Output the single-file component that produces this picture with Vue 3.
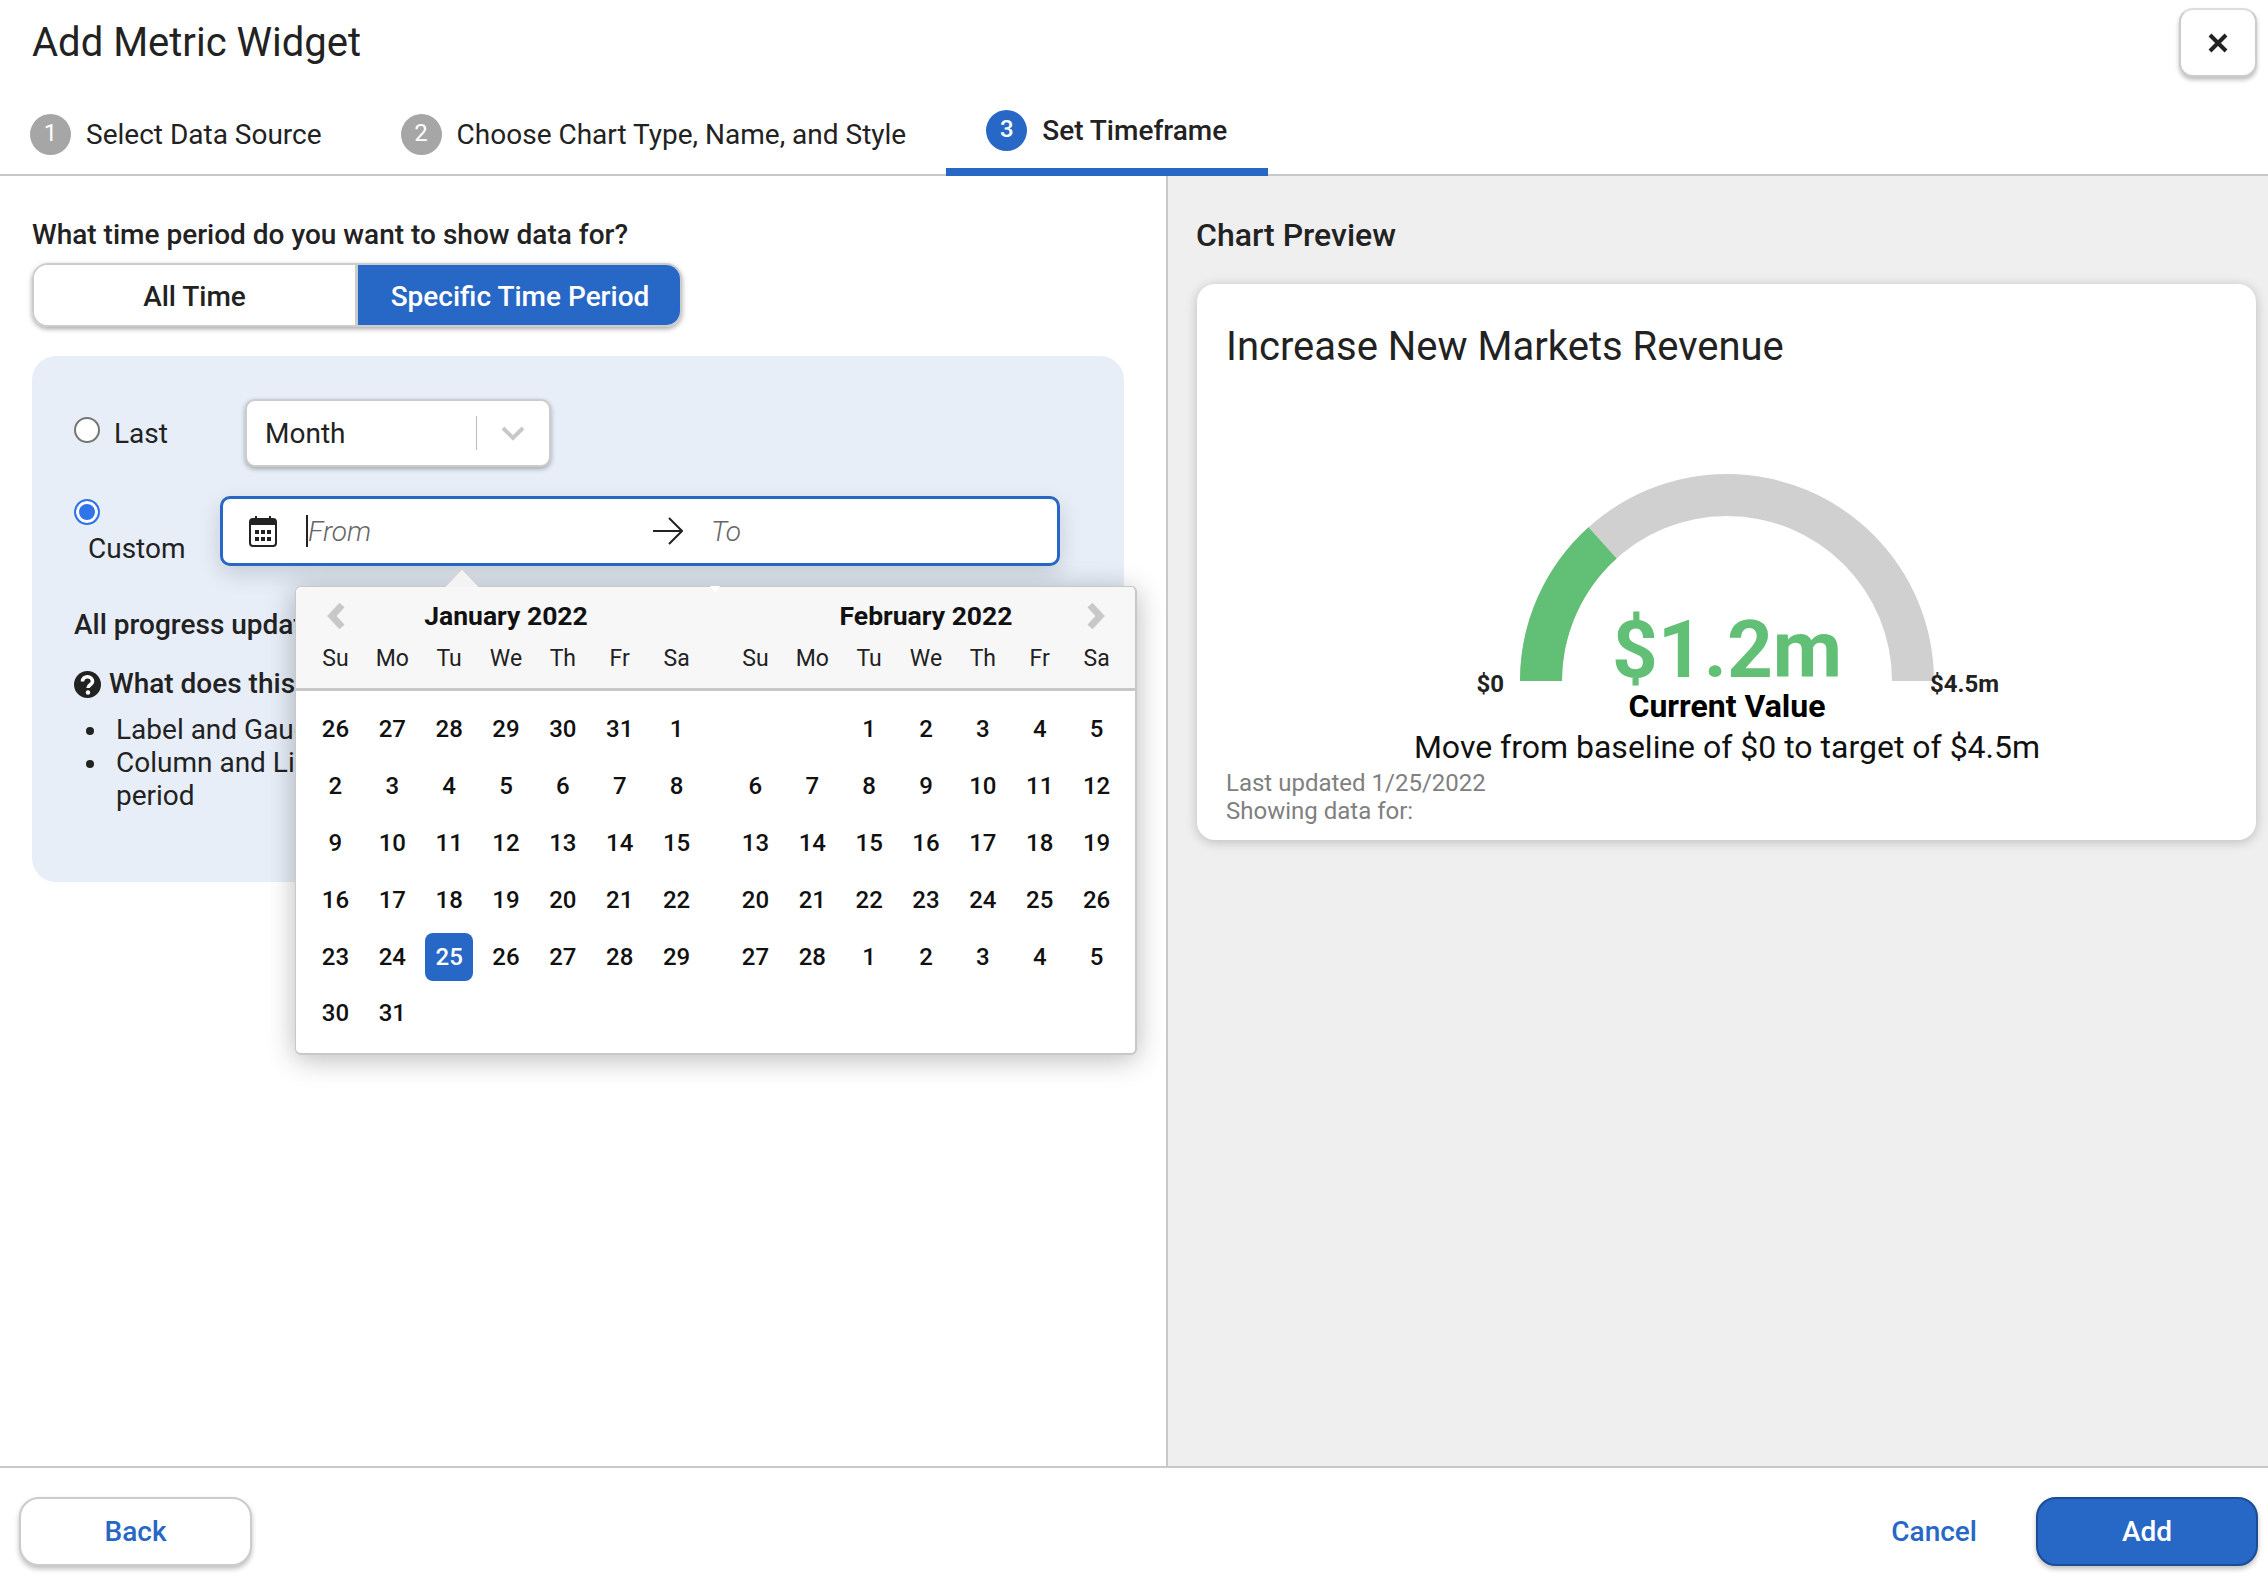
<script setup>
import { ref } from 'vue'

const tabs = [
  { n: 1, label: 'Select Data Source' },
  { n: 2, label: 'Choose Chart Type, Name, and Style' },
  { n: 3, label: 'Set Timeframe', active: true }
]

const weekdays = ['Su', 'Mo', 'Tu', 'We', 'Th', 'Fr', 'Sa']

const range = (a, b) => {
  const out = []
  for (let i = a; i <= b; i++) out.push(i)
  return out
}

const months = [
  {
    name: 'January 2022',
    side: 'prev',
    days: [26, 27, 28, 29, 30, 31, ...range(1, 31)]
  },
  {
    name: 'February 2022',
    side: 'next',
    days: ['', '', ...range(1, 28), ...range(1, 5)]
  }
]

const mode = ref('custom')
</script>

<template>
  <div class="page">
    <header class="head">
      <div class="title-row">
        <h1>Add Metric Widget</h1>
        <button class="close" aria-label="Close">
          <svg width="22" height="22" viewBox="0 0 22 22">
            <path d="M3 3 L19 19 M19 3 L3 19" stroke="#222" stroke-width="4" fill="none" />
          </svg>
        </button>
      </div>
      <nav class="tabs">
        <div v-for="tab in tabs" :key="tab.n" class="tab" :class="{ active: tab.active }">
          <span class="num">{{ tab.n }}</span>
          <span>{{ tab.label }}</span>
        </div>
      </nav>
    </header>

    <main class="body">
      <section class="left">
        <div class="question">What time period do you want to show data for?</div>
        <div class="toggle">
          <button>All Time</button>
          <button class="on">Specific Time Period</button>
        </div>

        <div class="panel">
          <div class="row-last">
            <label class="last-label">
              <input v-model="mode" class="radio" type="radio" value="last" />
              <span>Last</span>
            </label>
            <div class="select">
              <span class="select-text">Month</span>
              <span class="select-sep"></span>
              <svg width="24" height="15" viewBox="0 0 24 15">
                <path d="M2 2 L12 12 L22 2" stroke="#c8c8c8" stroke-width="4" fill="none" />
              </svg>
            </div>
          </div>

          <div class="row-custom">
            <label class="custom-label">
              <input v-model="mode" class="radio" type="radio" value="custom" />
              <span>Custom</span>
            </label>
            <div class="range">
              <svg class="cal" width="28" height="32" viewBox="0 0 28 32">
                <path d="M7 1 V6 M21 1 V6" stroke="#222" stroke-width="2" fill="none" />
                <rect x="1" y="4" width="26" height="27" rx="3" fill="none" stroke="#222" stroke-width="2" />
                <rect x="1" y="4" width="26" height="6" fill="#222" />
                <g fill="#222">
                  <rect x="6" y="15" width="4" height="4" />
                  <rect x="12" y="15" width="4" height="4" />
                  <rect x="18" y="15" width="4" height="4" />
                  <rect x="6" y="22" width="4" height="4" />
                  <rect x="12" y="22" width="4" height="4" />
                  <rect x="18" y="22" width="4" height="4" />
                </g>
              </svg>
              <span class="caret"></span>
              <span class="ph from">From</span>
              <svg class="arrow" width="30" height="28" viewBox="0 0 30 28">
                <path d="M0 14 H28 M16 1 L29 14 L16 27" stroke="#222" stroke-width="2" fill="none" />
              </svg>
              <span class="ph">To</span>
            </div>
          </div>

          <p class="note">All progress updates</p>
          <div class="help">
            <svg width="27" height="27" viewBox="0 0 27 27">
              <circle cx="13.5" cy="13.5" r="13.5" fill="#222" />
              <path d="M8.5 10.5 C8.5 4 18.5 4.5 18.5 10.5 C18.5 14 14 13.5 14 17" stroke="#fff" stroke-width="3.6" fill="none" />
              <circle cx="14" cy="21.5" r="2.2" fill="#fff" />
            </svg>
            <span>What does this</span>
          </div>
          <ul class="list">
            <li>Label and Gauge</li>
            <li>Column and Line<br />period</li>
          </ul>

          <div class="picker">
            <svg class="pointer" width="36" height="20" viewBox="0 0 36 20">
              <path d="M1 19 L18 1 L35 19" fill="#f3f3f3" stroke="#d0d0d0" stroke-width="1" />
            </svg>
            <span class="notch"></span>
            <div class="picker-head">
              <div v-for="m in months" :key="m.name" class="month-head">
                <div class="month-title">
                  <svg v-if="m.side === 'prev'" width="20" height="28" viewBox="0 0 20 28">
                    <path d="M16 3 L6 14 L16 25" stroke="#c8c8c8" stroke-width="7" fill="none" />
                  </svg>
                  <span v-else></span>
                  <strong>{{ m.name }}</strong>
                  <svg v-if="m.side === 'next'" width="20" height="28" viewBox="0 0 20 28">
                    <path d="M3 3 L13 14 L3 25" stroke="#c8c8c8" stroke-width="7" fill="none" />
                  </svg>
                  <span v-else></span>
                </div>
                <div class="week">
                  <span v-for="d in weekdays" :key="d">{{ d }}</span>
                </div>
              </div>
            </div>
            <div class="picker-body">
              <div v-for="m in months" :key="m.name" class="days">
                <span v-for="(d, i) in m.days" :key="i" class="day">
                  <b v-if="m.side === 'prev' && d === 25 && i > 20" class="today">{{ d }}</b>
                  <template v-else>{{ d }}</template>
                </span>
              </div>
            </div>
          </div>
        </div>
      </section>

      <section class="right">
        <h2>Chart Preview</h2>
        <div class="card">
          <div class="card-title">Increase New Markets Revenue</div>
          <div class="gauge">
            <svg width="416" height="208" viewBox="0 0 416 208">
              <path d="M1 208 A207 207 0 0 1 415 208 H373 A165 165 0 0 0 43 208 Z" fill="#d0d0d0" />
              <path d="M1 208 A207 207 0 0 1 69.5 54.2 L97.6 85.4 A165 165 0 0 0 43 208 Z" fill="#62bf76" />
            </svg>
            <span class="g-min">$0</span>
            <span class="g-value">$1.2m</span>
            <span class="g-max">$4.5m</span>
          </div>
          <div class="current">Current Value</div>
          <div class="move">Move from baseline of $0 to target of $4.5m</div>
          <div class="meta">Last updated 1/25/2022</div>
          <div class="meta">Showing data for:</div>
        </div>
      </section>
    </main>

    <footer class="foot">
      <button class="btn">Back</button>
      <div class="foot-right">
        <a class="cancel">Cancel</a>
        <button class="btn primary">Add</button>
      </div>
    </footer>
  </div>
</template>

<style>
html,
body {
  margin: 0;
  background: #fff;
}
</style>

<style scoped>
.page {
  width: 2268px;
  height: 1580px;
  display: flex;
  flex-direction: column;
  overflow: hidden;
  font-family: Roboto, 'Liberation Sans', sans-serif;
  color: #222;
  background: #fff;
}

button {
  font-family: inherit;
  cursor: pointer;
}

.head {
  height: 176px;
  box-sizing: border-box;
  border-bottom: 2px solid #c8c8c8;
  flex: none;
}

.title-row {
  display: flex;
  justify-content: space-between;
  align-items: flex-start;
  height: 98px;
  box-sizing: border-box;
  padding: 8px 11px 0 32px;
}

h1 {
  margin: 0;
  padding-top: 9px;
  font-size: 40px;
  line-height: 52px;
  font-weight: 400;
}

.close {
  width: 78px;
  height: 69px;
  border: 2px solid #ccc;
  border-top-color: #ddd;
  border-radius: 14px;
  background: #fff;
  box-shadow: 0 3px 4px rgba(0, 0, 0, 0.25);
  display: flex;
  align-items: center;
  justify-content: center;
}

.tabs {
  display: flex;
  align-items: flex-start;
  padding-left: 30px;
}

.tab {
  display: flex;
  align-items: center;
  gap: 15px;
  height: 72px;
  box-sizing: border-box;
  font-size: 28px;
  margin-right: 79px;
}

.num {
  width: 41px;
  height: 41px;
  padding-bottom: 3px;
  box-sizing: border-box;
  border-radius: 50%;
  background: #a6a6a6;
  color: #fff;
  font-size: 24px;
  display: flex;
  align-items: center;
  justify-content: center;
}

.tab.active {
  margin: 0 0 0 -39px;
  padding: 2px 41px 8px 40px;
  height: 78px;
  border-bottom: 8px solid #2767c6;
  font-weight: 500;
}

.tab.active .num {
  background: #2767c6;
}

.body {
  flex: 1;
  display: flex;
  min-height: 0;
}

.left {
  width: 1168px;
  box-sizing: border-box;
  padding: 41px 42px 0 32px;
  border-right: 2px solid #c8c8c8;
  flex: none;
}

.question {
  font-size: 28px;
  line-height: 36px;
  font-weight: 500;
}

.toggle {
  display: flex;
  width: 650px;
  height: 64px;
  margin-top: 10px;
  border-radius: 16px;
  box-shadow: 0 2px 5px rgba(0, 0, 0, 0.35);
  overflow: hidden;
  box-sizing: border-box;
  border: 2px solid #ccc;
}

.toggle button {
  flex: none;
  width: 321px;
  padding-top: 3px;
  border: 0;
  background: #fff;
  color: #222;
  font-size: 28px;
  font-weight: 500;
}

.toggle button.on {
  width: 327px;
  margin-top: -2px;
  margin-bottom: -2px;
  background: #2767c6;
  color: #fff;
  border-left: 3px solid #ccc;
}

.panel {
  position: relative;
  width: 1092px;
  height: 526px;
  margin-top: 29px;
  box-sizing: border-box;
  padding: 43px 42px 0;
  background: #e7eef8;
  border-radius: 24px;
  font-size: 28px;
}

.radio {
  appearance: none;
  display: block;
  flex: none;
  width: 26px;
  height: 26px;
  margin: 0;
  border: 2px solid #767676;
  border-radius: 50%;
  background: #fff;
  box-sizing: border-box;
}

.radio:checked {
  border-color: #2f74e8;
  background: #2f74e8;
  box-shadow: inset 0 0 0 3px #fff;
}

.row-last {
  display: flex;
  align-items: center;
  height: 68px;
}

.last-label {
  display: flex;
  align-items: center;
  gap: 14px;
  width: 171px;
}

.last-label .radio {
  margin-top: -6px;
}

.select {
  display: flex;
  align-items: center;
  width: 306px;
  height: 68px;
  box-sizing: border-box;
  padding: 0 24px 0 18px;
  border: 2px solid #ccc;
  border-radius: 10px;
  background: #fff;
  box-shadow: 0 2px 5px rgba(0, 0, 0, 0.3);
}

.select-text {
  flex: 1;
}

.select-sep {
  width: 1px;
  height: 34px;
  background: #bbb;
  margin-right: 24px;
}

.row-custom {
  display: flex;
  margin-top: 29px;
}

.custom-label {
  width: 146px;
  padding-top: 3px;
  flex: none;
}

.custom-label span {
  display: block;
  margin: 7px 0 0 14px;
  line-height: 34px;
}

.range {
  display: flex;
  align-items: center;
  width: 840px;
  height: 70px;
  box-sizing: border-box;
  padding-left: 26px;
  border: 3px solid #2767c6;
  border-radius: 10px;
  background: #fff;
  box-shadow: 0 8px 22px rgba(0, 0, 0, 0.14);
}

.caret {
  width: 2px;
  height: 32px;
  margin-left: 29px;
  background: #222;
}

.ph {
  font-style: italic;
  font-weight: 300;
  color: #666;
  font-size: 28px;
}

.ph.from {
  width: 345px;
}

.arrow {
  margin-right: 28px;
}

.note {
  margin: 42px 0 0;
  line-height: 34px;
  font-weight: 500;
}

.help {
  display: flex;
  align-items: center;
  gap: 8px;
  margin-top: 25px;
  line-height: 34px;
  font-weight: 500;
}

.list {
  margin: 12px 0 0;
  padding-left: 42px;
  line-height: 33px;
  list-style: none;
}

.list li {
  position: relative;
}

.list li::before {
  content: '';
  position: absolute;
  left: -30px;
  top: 14px;
  width: 8px;
  height: 8px;
  border-radius: 50%;
  background: #222;
}

.picker {
  position: absolute;
  left: 263px;
  top: 230px;
  width: 842px;
  height: 469px;
  box-sizing: border-box;
  border: 2px solid #c8c8c8;
  border-width: 1px 2px 2px 1px;
  border-radius: 6px;
  background: #fff;
  box-shadow: 0 4px 28px rgba(0, 0, 0, 0.28);
}

.pointer {
  position: absolute;
  left: 148px;
  top: -19px;
}

.notch {
  position: absolute;
  left: 414px;
  top: -1px;
  width: 0;
  height: 0;
  border-left: 5px solid transparent;
  border-right: 5px solid transparent;
  border-top: 7px solid #fff;
}

.picker-head {
  display: flex;
  justify-content: space-between;
  height: 104px;
  box-sizing: border-box;
  padding: 0 10px 0 11px;
  background: #f7f7f7;
  border-bottom: 3px solid #c8c8c8;
  border-radius: 6px 6px 0 0;
}

.month-head {
  width: 398px;
}

.month-title {
  display: grid;
  grid-template-columns: 57px 1fr 57px;
  justify-items: center;
  align-items: center;
  height: 55px;
  padding-top: 1px;
  font-size: 26.5px;
}

.month-title strong {
  font-weight: 700;
  color: #111;
}

.week {
  display: grid;
  grid-template-columns: repeat(7, 1fr);
  text-align: center;
  font-size: 23px;
  line-height: 32px;
  color: #222;
}

.picker-body {
  display: flex;
  justify-content: space-between;
  padding: 10px 10px 0 11px;
}

.days {
  width: 398px;
  display: grid;
  grid-template-columns: repeat(7, 1fr);
  grid-auto-rows: 56.8px;
}

.day {
  display: flex;
  align-items: center;
  justify-content: center;
  font-size: 24px;
  font-weight: 500;
  color: #111;
}

.today {
  width: 48px;
  height: 48px;
  border-radius: 8px;
  background: #2767c6;
  color: #fff;
  font-weight: 500;
  display: flex;
  align-items: center;
  justify-content: center;
}

.right {
  flex: 1;
  box-sizing: border-box;
  padding: 41px 12px 0 28px;
  background: #efefef;
}

h2 {
  margin: 0;
  font-size: 32px;
  line-height: 36px;
  font-weight: 500;
}

.card {
  height: 556px;
  margin-top: 31px;
  margin-left: 1px;
  box-sizing: border-box;
  padding: 39px 28px 0 29px;
  background: #fff;
  border-radius: 18px;
  box-shadow: 0 2px 12px rgba(0, 0, 0, 0.22);
  position: relative;
}

.card-title {
  font-size: 40px;
  line-height: 48px;
}

.gauge {
  position: relative;
  width: 416px;
  height: 208px;
  margin: 102px auto 0;
}

.gauge svg {
  display: block;
}

.g-min,
.g-max {
  position: absolute;
  top: 196px;
  font-size: 24px;
  line-height: 30px;
  font-weight: 700;
}

.g-min {
  right: 431px;
}

.g-max {
  left: 411px;
}

.g-value {
  position: absolute;
  left: 0;
  right: 0;
  top: 139px;
  text-align: center;
  color: #62bf76;
  font-size: 80px;
  line-height: 76px;
  font-weight: 700;
}

.current {
  margin-top: 7px;
  text-align: center;
  font-size: 32px;
  line-height: 36px;
  font-weight: 700;
  color: #000;
}

.move {
  margin-top: 3px;
  text-align: center;
  font-size: 32px;
  line-height: 40px;
  color: #111;
}

.meta {
  font-size: 24px;
  line-height: 28px;
  color: #808080;
}

.move + .meta {
  margin-top: 2px;
}

.foot {
  flex: none;
  height: 114px;
  box-sizing: border-box;
  border-top: 2px solid #c8c8c8;
  padding: 29px 10px 0 19px;
  display: flex;
  justify-content: space-between;
  align-items: flex-start;
}

.foot-right {
  display: flex;
  align-items: center;
  gap: 59px;
}

.btn {
  width: 233px;
  height: 69px;
  font-size: 28px;
  font-weight: 500;
  color: #2767c6;
  background: #fff;
  border: 2px solid #ccc;
  border-radius: 20px;
  box-shadow: 0 3px 5px rgba(0, 0, 0, 0.25);
}

.btn.primary {
  width: 222px;
  background: #2767c6;
  color: #fff;
  border-color: #1b4c95;
}

.cancel {
  font-size: 28px;
  font-weight: 500;
  color: #2767c6;
}
</style>
